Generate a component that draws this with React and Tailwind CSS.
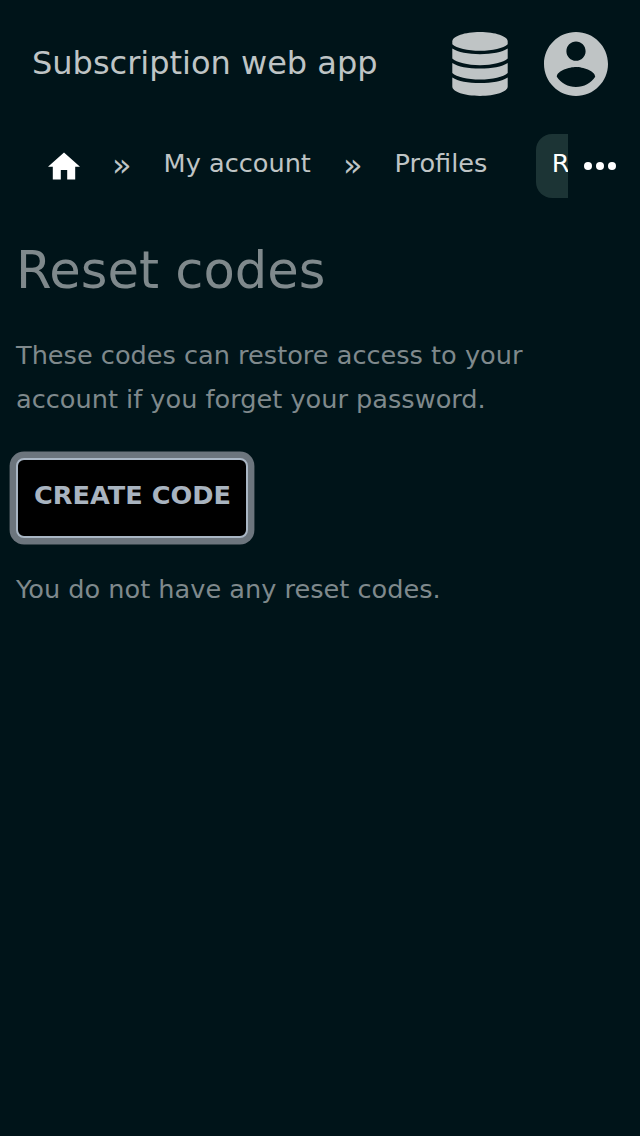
const Sep = () => <span className="ml-8 pt-1.5 text-[32px] leading-[50px]">»</span>;

export default function App() {
  return (
    <div className="min-h-[1136px] w-[640px] bg-[#001419] font-['DejaVu_Sans',sans-serif] text-[25.6px] text-[#7f898c]">
      <header className="flex h-32 items-center px-8 text-[#bfc4c5]">
        <h1 className="flex-1 pb-0.5 text-[32px] leading-[48px] whitespace-nowrap">Subscription web app</h1>
        <svg className="mr-9 h-16 w-14" viewBox="0 0 56 64" fill="currentColor">
          <path d="M28 0C43.3 0 55.7 4.2 55.7 9.4V12.2C51.5 16.1 40.5 18.8 28 18.8S4.5 16.1 .3 12.2V9.4C.3 4.2 12.7 0 28 0Z" />
          <path d="M.3 16.6C6 20.3 16 22.2 28 22.2S50 20.3 55.7 16.6V26.5C51.5 30.4 40.5 33.2 28 33.2S4.5 30.4 .3 26.5Z" />
          <path d="M.3 31C6 34.7 16 36.6 28 36.6S50 34.7 55.7 31V41C51.5 44.9 40.5 47.6 28 47.6S4.5 44.9 .3 41Z" />
          <path d="M.3 45.4C6 49.1 16 51 28 51S50 49.1 55.7 45.4V54.6C55.7 59.8 43.3 64 28 64S.3 59.8 .3 54.6Z" />
        </svg>
        <svg className="h-16 w-16" viewBox="2 2 20 20" fill="currentColor">
          <path d="M12 2C6.48 2 2 6.48 2 12s4.48 10 10 10 10-4.48 10-10S17.52 2 12 2zm0 3c1.66 0 3 1.34 3 3s-1.34 3-3 3-3-1.34-3-3 1.34-3 3-3zm0 14.2c-2.5 0-4.71-1.28-6-3.22.03-1.99 4-3.08 6-3.08 1.99 0 5.97 1.09 6 3.08-1.29 1.94-3.5 3.22-6 3.22z" />
        </svg>
      </header>
      <nav className="flex h-20 items-start pt-1.5">
        <div className="flex h-16 w-[568px] items-start overflow-hidden whitespace-nowrap leading-[58px] text-[#bfc4c5]">
          <svg className="mt-4 ml-12 h-8 w-8 shrink-0 text-white" viewBox="2 1.5 20 20" fill="currentColor"><path d="M10 20v-6h4v6h5v-8h3L12 3 2 12h3v8z" /></svg>
          <Sep />
          <span className="ml-8">My account</span>
          <Sep />
          <span className="ml-8">Profiles</span>
          <span className="ml-[49px] h-16 shrink-0 rounded-2xl bg-[#1c3435] pr-4 pl-[15.4px] text-white">Reset codes</span>
        </div>
        <svg className="ml-4 h-16 w-8 text-white" viewBox="0 0 32 64" fill="currentColor"><circle cx="4" cy="32" r="4" /><circle cx="16" cy="32" r="4" /><circle cx="28" cy="32" r="4" /></svg>
      </nav>
      <main className="px-4">
        <h2 className="pt-8 text-[51.2px] leading-[60px]">Reset codes</h2>
        <p className="mt-[33px] leading-[44px]">These codes can restore access to your<br />account if you forget your password.</p>
        <button className="mt-[37px] block h-20 w-[232px] rounded-lg border-2 border-[#a9b6c4] bg-black pb-1.5 pl-px text-[25.6px] font-bold text-[#a9b4c0] ring-[6.4px] ring-[#6c757d]">CREATE CODE</button>
        <p className="mt-[29px] leading-[44px]">You do not have any reset codes.</p>
      </main>
    </div>
  );
}
